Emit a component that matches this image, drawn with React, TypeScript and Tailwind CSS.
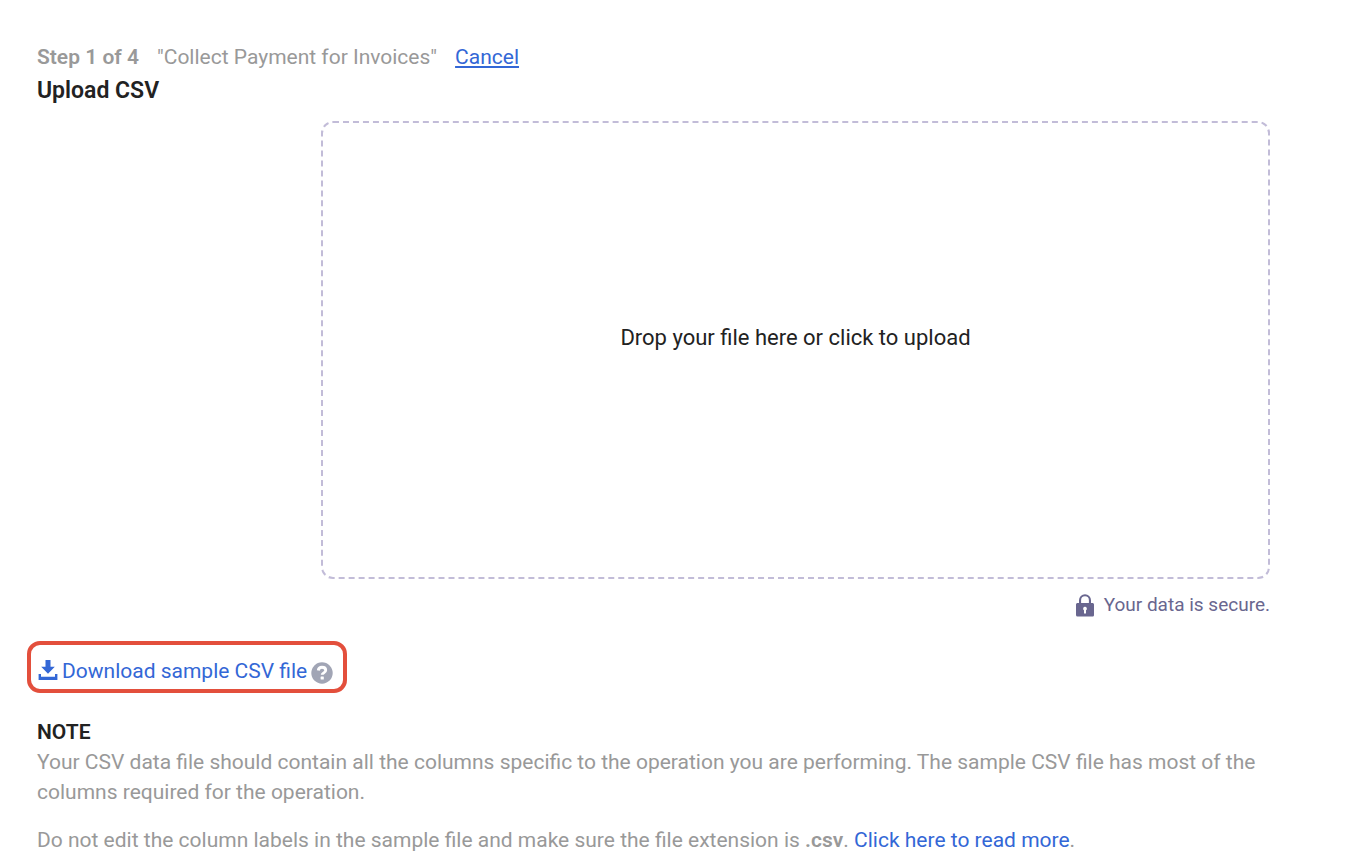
import { useState } from 'react';
import type { ChangeEvent, DragEvent } from 'react';

function DownloadIcon() {
    return (
        <svg className="w-5 h-5 mb-0.5 shrink-0" viewBox="0 0 20 20" fill="currentColor" aria-hidden="true">
            <path d="M7.5 0h5v6.8h4.3L10 13.8 3.2 6.8h4.3z" />
            <path d="M.6 14H3v2.7h14V14h2.4v6H.6z" />
        </svg>
    );
}

function LockIcon() {
    return (
        <svg className="w-[18px] h-[23px] shrink-0" viewBox="0 0 18 23" fill="currentColor" aria-hidden="true">
            <path
                fillRule="evenodd"
                d="M3 9V6.2a6 6 0 0 1 12 0V9h1.4c.9 0 1.6.7 1.6 1.6v10.3c0 .9-.7 1.6-1.6 1.6H1.6A1.6 1.6 0 0 1 0 20.9V10.6C0 9.7.7 9 1.6 9zm2.1 0h7.8V6.2a3.9 3.9 0 0 0-7.8 0zM9 12.8a1.9 1.9 0 0 0-1 3.5v3.2h2v-3.2a1.9 1.9 0 0 0-1-3.5z"
            />
        </svg>
    );
}

function HelpIcon() {
    return (
        <svg className="w-[22px] h-[22px]" viewBox="0 0 22 22" aria-hidden="true">
            <circle cx="11" cy="11" r="10.7" fill="#a1a5b5" />
            <path
                d="M7.3 8.5C7.5 6.3 9 5.3 11 5.3c2.2 0 3.7 1.2 3.7 3 0 2.7-3.5 2.4-3.5 4.5"
                fill="none"
                stroke="#fff"
                strokeWidth="2.9"
            />
            <rect x="9.6" y="14.4" width="3.2" height="3" rx="0.5" fill="#fff" />
        </svg>
    );
}

export default function App() {
    const [fileName, setFileName] = useState('');

    const handleChange = (e: ChangeEvent<HTMLInputElement>) => {
        setFileName(e.target.files?.[0]?.name ?? '');
    };

    const handleDrop = (e: DragEvent<HTMLLabelElement>) => {
        e.preventDefault();
        setFileName(e.dataTransfer.files[0]?.name ?? '');
    };

    return (
        <main className="bg-white pl-[37px] pr-[75px] pt-[42px] font-['Roboto','Liberation_Sans',sans-serif] text-[21px] leading-[30px] text-[#999999]">
            {/* Header */}
            <header>
                <div className="flex items-center gap-[18px]">
                    <span className="font-semibold">Step 1 of 4</span>
                    <span>"Collect Payment for Invoices"</span>
                    <a href="#cancel" className="text-[#3367d6] underline underline-offset-2">Cancel</a>
                </div>
                <h1 className="mt-1 text-[23px] leading-[30px] font-semibold text-[#222222]">Upload CSV</h1>
            </header>

            {/* Drop zone */}
            <div className="ml-[284px] mt-[15px]">
                <label
                    htmlFor="csv-file"
                    onDragOver={e => e.preventDefault()}
                    onDrop={handleDrop}
                    className="flex items-center justify-center h-[458px] pb-6 border-2 border-dashed border-[#c2bcd8] rounded-xl cursor-pointer text-[22px] text-[#222222]"
                >
                    {fileName || 'Drop your file here or click to upload'}
                    <input id="csv-file" type="file" accept=".csv" onChange={handleChange} className="sr-only" />
                </label>
                <p className="mt-[11px] flex items-center justify-end gap-2.5 text-[19px] leading-[30px] text-[#69668f]">
                    <LockIcon />
                    Your data is secure.
                </p>
            </div>

            {/* Sample file */}
            <div className="-ml-2.5 mt-[21px] w-fit flex items-center gap-1 h-[52px] pl-[7px] pr-[10px] pt-2 border-4 border-[#e34f3c] rounded-[13px]">
                <a href="#sample" className="flex items-center gap-1 text-[#3367d6]">
                    <DownloadIcon />
                    Download sample CSV file
                </a>
                <button type="button" aria-label="Help with the sample file" className="mt-1 cursor-pointer">
                    <HelpIcon />
                </button>
            </div>

            {/* Note */}
            <section className="mt-6">
                <h2 className="font-semibold text-[#222222]">NOTE</h2>
                <p>
                    Your CSV data file should contain all the columns specific to the operation you are performing. The sample CSV file has most of the columns required for the operation.
                </p>
                <p className="mt-[18px]">
                    Do not edit the column labels in the sample file and make sure the file extension is <b className="font-semibold">.csv</b>.{' '}
                    <a href="#read-more" className="text-[#3367d6]">Click here to read more</a>.
                </p>
            </section>
        </main>
    );
}
